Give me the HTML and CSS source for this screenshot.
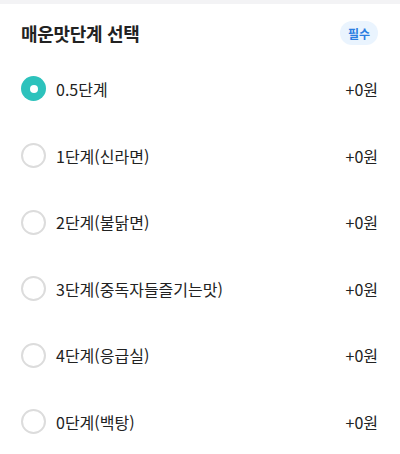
FILE: index.html
```html
<!DOCTYPE html>
<html lang="ko">
<head>
<meta charset="utf-8">
<link rel="stylesheet" href="styles.css">
</head>
<body>
<div class="topbar"></div>
<section class="section">
  <div class="header">
    <h2 class="title">매운맛단계 선택</h2>
    <span class="badge">필수</span>
  </div>
  <ul class="options">
    <li class="option selected"><span class="radio"></span><span class="label">0.5단계</span><span class="price">+0원</span></li>
    <li class="option"><span class="radio"></span><span class="label">1단계(신라면)</span><span class="price">+0원</span></li>
    <li class="option"><span class="radio"></span><span class="label">2단계(불닭면)</span><span class="price">+0원</span></li>
    <li class="option"><span class="radio"></span><span class="label">3단계(중독자들즐기는맛)</span><span class="price">+0원</span></li>
    <li class="option"><span class="radio"></span><span class="label">4단계(응급실)</span><span class="price">+0원</span></li>
    <li class="option"><span class="radio"></span><span class="label">0단계(백탕)</span><span class="price">+0원</span></li>
  </ul>
</section>
</body>
</html>
```

FILE: styles.css
```css
* { box-sizing: border-box; }
html, body {
  margin: 0;
  padding: 0;
  background: #fff;
  font-family: "Noto Sans CJK KR", "Noto Sans", sans-serif;
  color: #222;
}
.topbar {
  height: 4px;
  background: #f3f3f5;
}
.section {
  padding: 17px 22px 0 21px;
}
.header {
  display: flex;
  align-items: center;
  justify-content: space-between;
  height: 24px;
}
.title {
  margin: 0;
  font-size: 18px;
  font-weight: 700;
  letter-spacing: -0.3px;
  line-height: 24px;
  color: #222;
}
.badge {
  display: inline-flex;
  align-items: center;
  justify-content: center;
  width: 38px;
  height: 24px;
  border-radius: 12px;
  background: #eaf4fe;
  color: #2a7de1;
  font-size: 12px;
  font-weight: 700;
}
.options {
  list-style: none;
  margin: 10.7px 0 0;
  padding: 0;
}
.option {
  display: flex;
  align-items: center;
  height: 66.6px;
}
.radio {
  width: 25px;
  height: 25px;
  border-radius: 50%;
  border: 2px solid #dcdcdc;
  flex: none;
  display: flex;
  align-items: center;
  justify-content: center;
}
.selected .radio {
  border: none;
  background: #2dc2bc;
}
.selected .radio::after {
  content: "";
  width: 8px;
  height: 8px;
  border-radius: 50%;
  background: #fff;
}
.label {
  margin-left: 10px;
  flex: 1;
  font-size: 16px;
  color: #222;
}
.price {
  font-size: 16px;
  color: #222;
}
```
